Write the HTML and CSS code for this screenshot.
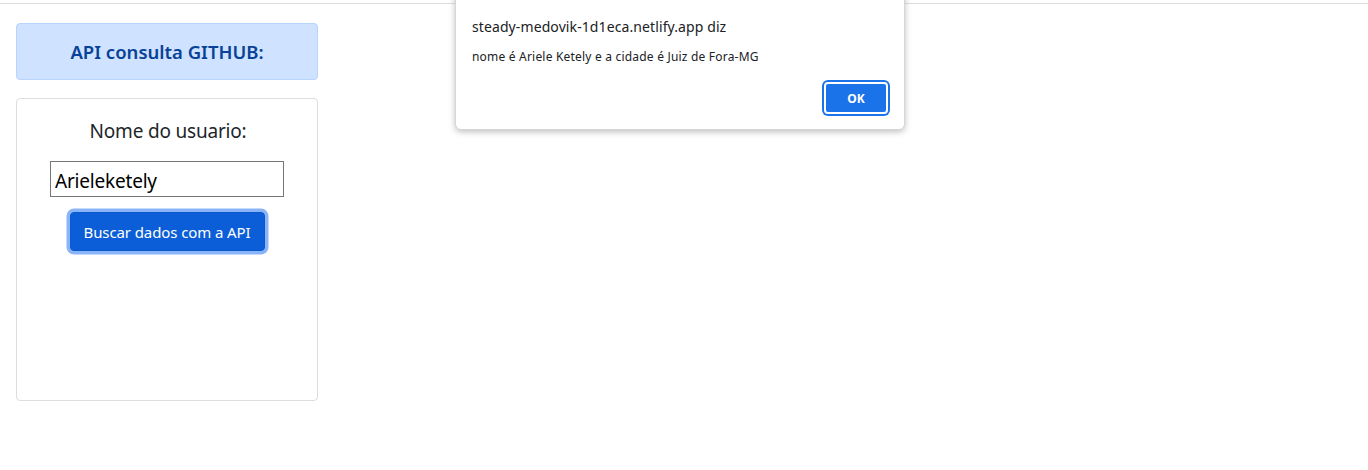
FILE: index.html
```html
<!DOCTYPE html>
<html lang="pt-BR">
<head>
<meta charset="utf-8">
<title>API consulta GITHUB</title>
<link rel="stylesheet" href="styles.css">
</head>
<body>
<div class="chrome"></div>
<main class="page">
  <div class="alert">API consulta GITHUB:</div>
  <div class="card">
    <label class="label" for="user">Nome do usuario:</label>
    <input class="field" id="user" type="text" value="Arieleketely">
    <button class="btn">Buscar dados com a API</button>
  </div>
</main>
<div class="dialog">
  <div class="dialog-title">steady-medovik-1d1eca.netlify.app diz</div>
  <div class="dialog-msg">nome é Ariele Ketely e a cidade é Juiz de Fora-MG</div>
  <div class="dialog-actions"><button class="ok">OK</button></div>
</div>
</body>
</html>
```
FILE: styles.css
```css
html, body { margin: 0; padding: 0; background: #fff; }
body { font-family: "Noto Sans", "Open Sans", Arial, sans-serif; color: #212529; width: 1368px; height: 470px; overflow: hidden; position: relative; }
.chrome { height: 3px; border-bottom: 1px solid #dedede; }
.page { padding: 19px 16px; width: 302px; display: flex; flex-direction: column; gap: 18px; }
.alert { box-sizing: border-box; height: 57px; background: #cfe2ff; border: 1px solid #b6d4fe; border-radius: 4px; color: #084298; font-size: 18.5px; font-weight: 600; display: flex; align-items: center; justify-content: center; letter-spacing: 0; }
.card { box-sizing: border-box; height: 303px; border: 1px solid #dddddd; border-radius: 4px; display: flex; flex-direction: column; align-items: center; padding-top: 19px; }
.label { font-size: 19px; line-height: 26px; color: #212529; margin-left: 2px; letter-spacing: -0.2px; }
.field { box-sizing: border-box; width: 234px; height: 36px; margin-top: 17px; border: 1px solid #767676; border-radius: 0; padding: 3px 4px 0 4px; font-family: inherit; font-size: 19px; color: #000; outline: none; letter-spacing: -0.2px; }
.btn { box-sizing: border-box; margin-top: 15px; width: 195px; height: 39px; background: #0b5ed7; border: 1px solid #0a58ca; border-radius: 4px; color: #fff; font-family: inherit; font-size: 15px; letter-spacing: -0.1px; box-shadow: 0 0 0 3.5px #8ab4f8; padding: 0; }
.dialog { position: absolute; left: 455px; top: -10px; width: 450px; box-sizing: border-box; background: #fff; border: 1px solid #d6d6d6; border-radius: 0 0 6px 6px; box-shadow: 0 2px 6px rgba(0,0,0,0.25); padding: 26px 16px 15px 16px; }
.dialog-title { font-size: 14px; line-height: 20px; color: #202124; letter-spacing: 0.1px; }
.dialog-msg { font-size: 12px; line-height: 16px; color: #202124; margin-top: 12px; letter-spacing: 0.2px; }
.dialog-actions { display: flex; justify-content: flex-end; margin-top: 17px; }
.ok { width: 64px; height: 32px; box-sizing: border-box; background: #1a73e8; color: #fff; font-family: inherit; font-weight: 700; font-size: 12px; border: 2px solid #fff; border-radius: 4px; box-shadow: 0 0 0 2px #1a73e8; padding: 0; }
```
